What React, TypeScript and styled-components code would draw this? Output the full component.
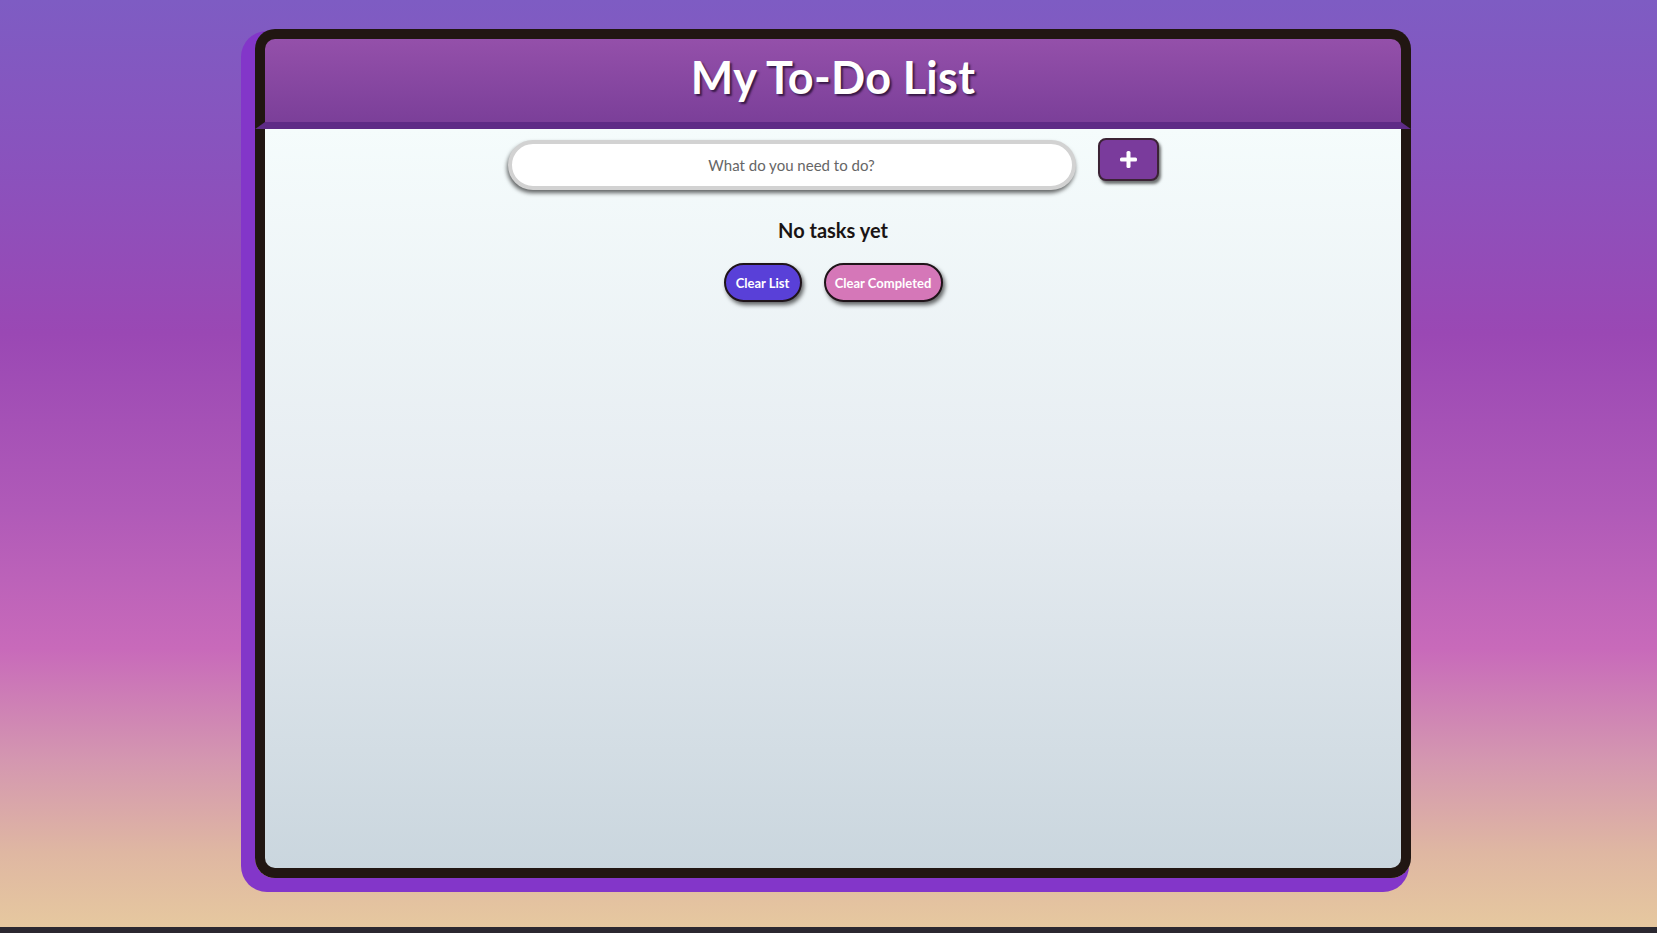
import React from "react";
import styled, { createGlobalStyle } from "styled-components";

const GlobalStyle = createGlobalStyle`
  html { background: #2b2830; }
  body {
    margin: 0;
    font-family: "Lato", "Noto Sans", sans-serif;
  }
  * { box-sizing: border-box; }
`;

const Page = styled.div`
  height: 927px;
  padding: 29px 0 0 9px;
  display: flex;
  justify-content: center;
  align-items: flex-start;
  background: linear-gradient(
    180deg,
    #7e5cc3 0%,
    #8a52bd 18%,
    #9a48b4 36%,
    #b05ab8 55%,
    #c86aba 70%,
    #d497b0 82%,
    #dfb7a2 92%,
    #e6c89f 100%
  );
`;

const Card = styled.div`
  width: 1156px;
  height: 849px;
  display: flex;
  flex-direction: column;
  border-radius: 20px;
  box-shadow: -8px 8px 0 6px #8336c9;
`;

const Header = styled.header`
  height: 100px;
  border: 10px solid #211612;
  border-bottom: 7px solid #5e2b86;
  border-radius: 20px 20px 0 0;
  background: linear-gradient(180deg, #9450aa 0%, #7b3f99 100%);
  display: flex;
  align-items: center;
  justify-content: center;
`;

const Title = styled.h1`
  margin: 0 0 6px 0;
  color: #ffffff;
  font-size: 45px;
  font-weight: 700;
  line-height: 1;
  letter-spacing: 0.3px;
  text-shadow: 2px 2px 2px rgba(30, 10, 40, 0.75);
`;

const Body = styled.main`
  flex: 1;
  border: 10px solid #211612;
  border-top: 0;
  border-radius: 0 0 20px 20px;
  background: linear-gradient(180deg, #f5fcfc 0%, #e6ecf1 50%, #cad6de 100%);
  display: flex;
  flex-direction: column;
  align-items: center;
  padding-top: 9px;
`;

const InputRow = styled.div`
  display: flex;
  align-items: flex-start;
  gap: 22px;
`;

const TaskInput = styled.input`
  width: 568px;
  height: 50px;
  margin-top: 2px;
  border: 4px solid #d2d2d2;
  border-radius: 25px;
  background: #ffffff;
  box-shadow: -1px 3px 4px rgba(0, 0, 0, 0.6);
  text-align: center;
  font-family: "Lato", "Noto Sans", sans-serif;
  font-size: 15px;
  color: #333;
  outline: none;
  &::placeholder {
    color: #666;
  }
`;

const AddButton = styled.button`
  width: 61px;
  height: 43px;
  border: 2px solid #3b2335;
  border-radius: 8px;
  background: #7a3b9c;
  box-shadow: 2px 3px 3px rgba(0, 0, 0, 0.55);
  display: flex;
  align-items: center;
  justify-content: center;
  padding: 0;
  cursor: pointer;
`;

const EmptyText = styled.h2`
  margin: 28px 0 0 0;
  font-size: 20px;
  line-height: 24px;
  font-weight: 700;
  color: #1a1414;
`;

const ActionRow = styled.div`
  display: flex;
  gap: 22px;
  margin-top: 21px;
`;

const Pill = styled.button<{ $bg: string; $w: number }>`
  width: ${(p) => p.$w}px;
  height: 39px;
  border: 2.5px solid #1f1419;
  border-radius: 20px;
  background: ${(p) => p.$bg};
  color: #ffffff;
  font-family: "Lato", "Noto Sans", sans-serif;
  font-size: 13px;
  font-weight: 700;
  box-shadow: 2px 3px 4px rgba(0, 0, 0, 0.6);
  padding: 0;
  cursor: pointer;
`;

const PlusIcon = () => (
  <svg width="17" height="17" viewBox="0 0 17 17">
    <rect x="6.5" y="0" width="4" height="17" rx="1.5" fill="#fff" />
    <rect x="0" y="6.5" width="17" height="4" rx="1.5" fill="#fff" />
  </svg>
);

export default function App() {
  return (
    <>
      <GlobalStyle />
      <Page>
        <Card>
          <Header>
            <Title>My To-Do List</Title>
          </Header>
          <Body>
            <InputRow>
              <TaskInput placeholder="What do you need to do?" />
              <AddButton aria-label="Add task">
                <PlusIcon />
              </AddButton>
            </InputRow>
            <EmptyText>No tasks yet</EmptyText>
            <ActionRow>
              <Pill $bg="#5940d8" $w={78}>Clear List</Pill>
              <Pill $bg="#d577b8" $w={119}>Clear Completed</Pill>
            </ActionRow>
          </Body>
        </Card>
      </Page>
    </>
  );
}
